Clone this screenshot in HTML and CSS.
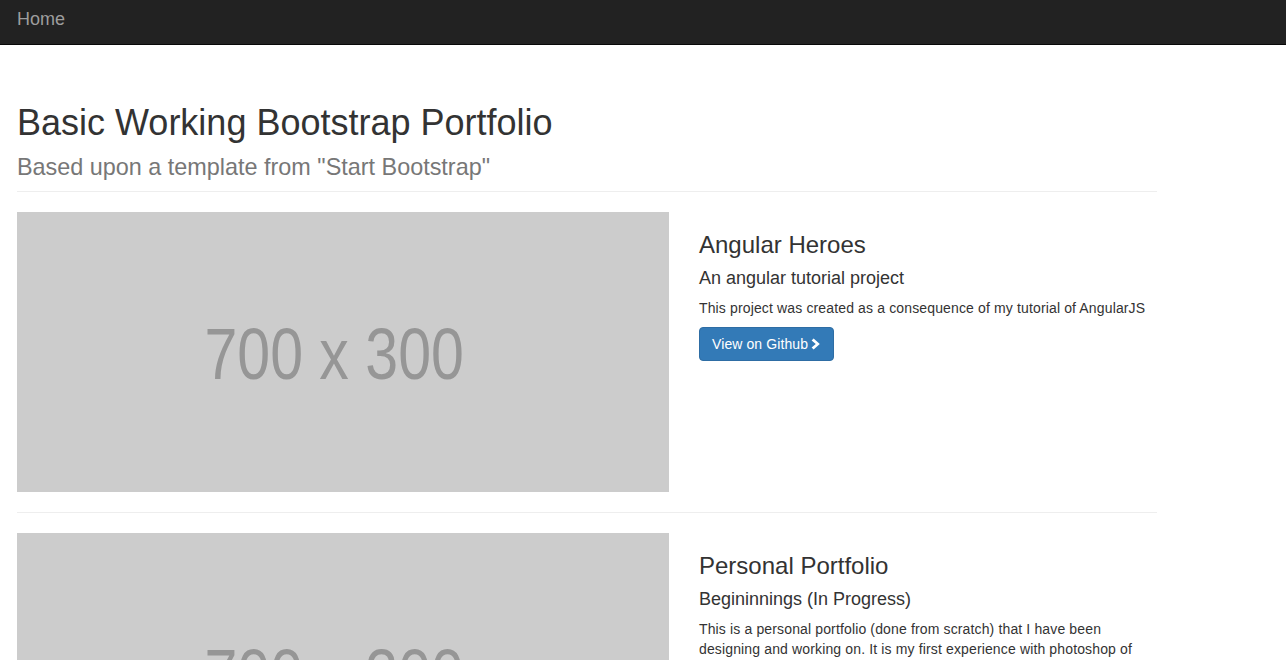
FILE: index.html
```html
<!DOCTYPE html>
<html>
<head>
<meta charset="utf-8">
<title>Basic Working Bootstrap Portfolio</title>
<link rel="stylesheet" href="styles.css">
</head>
<body>
<nav class="navbar">
  <a class="brand" href="#">Home</a>
</nav>
<main class="container">
  <header class="page-header">
    <h1>Basic Working Bootstrap Portfolio<br><small>Based upon a template from "Start Bootstrap"</small></h1>
  </header>

  <section class="project">
    <div class="col-img">
      <div class="placeholder"><span>700 x 300</span></div>
    </div>
    <div class="col-text">
      <h3>Angular Heroes</h3>
      <h4>An angular tutorial project</h4>
      <p>This project was created as a consequence of my tutorial of AngularJS</p>
      <a class="btn" href="#">View on Github <svg class="chev" viewBox="0 0 10 12" width="10" height="12"><path d="M2.6 0.4 L8.8 6 L2.6 11.6 L0.6 9.6 L4.8 6 L0.6 2.4 Z" fill="#fff"/></svg></a>
    </div>
  </section>

  <hr class="sep">

  <section class="project">
    <div class="col-img">
      <div class="placeholder"><span>700 x 300</span></div>
    </div>
    <div class="col-text">
      <h3>Personal Portfolio</h3>
      <h4>Begininnings (In Progress)</h4>
      <p>This is a personal portfolio (done from scratch) that I have been designing and working on. It is my first experience with photoshop of any kind, and I am still learning a lot.</p>
      <a class="btn" href="#">View on Github <svg class="chev" viewBox="0 0 10 12" width="10" height="12"><path d="M2.6 0.4 L8.8 6 L2.6 11.6 L0.6 9.6 L4.8 6 L0.6 2.4 Z" fill="#fff"/></svg></a>
    </div>
  </section>
</main>
</body>
</html>
```
FILE: styles.css
```css
* { box-sizing: border-box; }
html, body { margin: 0; padding: 0; }
body {
  font-family: "Liberation Sans", Arial, sans-serif;
  font-size: 14px;
  line-height: 20px;
  color: #333;
  background: #fff;
}
.navbar {
  height: 45px;
  background: #222;
  border-bottom: 1px solid #080808;
  display: flex;
  align-items: center;
  padding: 0 17px 7px;
}
.brand {
  color: #9d9d9d;
  font-size: 18px;
  line-height: 20px;
  text-decoration: none;
}
.container {
  width: 1170px;
  margin-left: 2px;
  padding: 0 15px;
}
.page-header {
  margin: 58px 0 20px;
  padding-bottom: 9px;
  border-bottom: 1px solid #eee;
}
h1 {
  margin: 0;
  font-size: 36px;
  font-weight: 500;
  line-height: 1.1;
  color: #333;
}
h1 small {
  font-size: 65%;
  font-weight: 400;
  line-height: 1;
  color: #777;
}
.project {
  display: flex;
}
.col-img {
  width: 667px;
  padding-right: 15px;
}
.col-text {
  width: 473px;
  padding-left: 15px;
}
.placeholder {
  height: 280px;
  background: #ccc;
  display: flex;
  align-items: center;
  justify-content: center;
  padding-right: 18px;
  padding-top: 3px;
}
.placeholder span {
  font-size: 72px;
  line-height: 1;
  color: #969696;
  display: inline-block;
  transform: scaleX(0.82);
}
h3 {
  font-size: 24px;
  font-weight: 500;
  line-height: 1.1;
  margin: 20px 0 10px;
}
h4 {
  font-size: 18px;
  font-weight: 500;
  line-height: 1.1;
  margin: 10px 0 10px;
}
p {
  margin: 0 0 9px;
  letter-spacing: 0.14px;
}
.btn {
  display: inline-flex;
  align-items: center;
  gap: 3px;
  height: 34px;
  padding: 6px 12px;
  border: 1px solid #2e6da4;
  border-radius: 4px;
  background: #337ab7;
  color: #fff;
  text-decoration: none;
  font-size: 14px;
  line-height: 20px;
  letter-spacing: 0.1px;
}
.chev { display: block; }
.sep {
  border: 0;
  border-top: 1px solid #eee;
  margin: 20px 0;
}
```
